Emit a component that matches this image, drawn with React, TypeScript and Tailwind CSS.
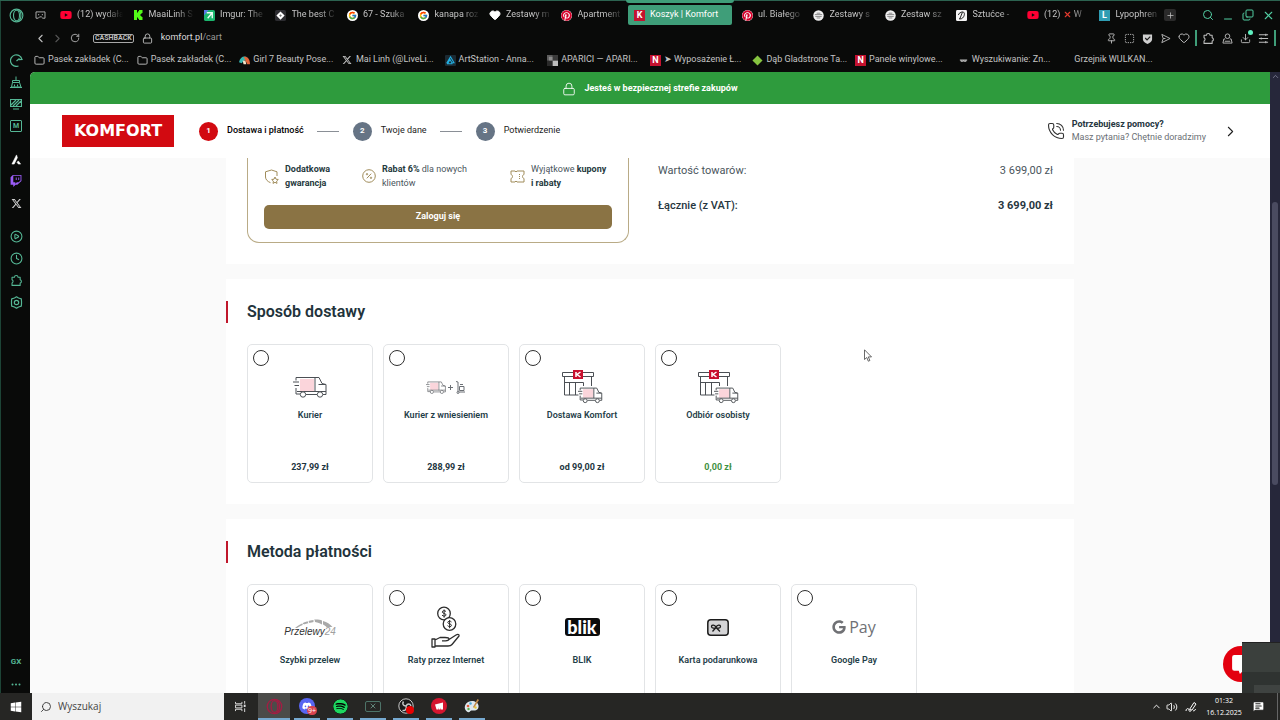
import type { ReactNode } from 'react';
import {
  CirclePlay,
  Clock,
  Folder,
  Heart,
  Lock,
  MessageSquareText,
  PhoneCall,
  Plus,
  RotateCw,
  Search,
  ChevronLeft,
  ChevronRight,
  ChevronUp,
  X,
  Minus,
  Copy,
  Pin,
  SquareDashed,
  Download,
  Volume2,
} from 'lucide-react';
import { FaDiscord, FaPinterest, FaSpotify, FaTwitch, FaWindows, FaXTwitter, FaYoutube, FaGoogle } from 'react-icons/fa6';
import { FcGoogle } from 'react-icons/fc';

/* ---------- small drawings ---------- */

function OperaMark({ className }: { className: string }) {
  return (
    <svg viewBox="0 0 16 16" className={className} fill="none" stroke="currentColor" strokeWidth="1.2">
      <circle cx="8" cy="8" r="6.8" />
      <ellipse cx="8" cy="8" rx="3.2" ry="5.6" />
      <path d="M10 2.5c3.600 1.500 3.600 9.500 0 11" />
    </svg>
  );
}

function PuzzleMark() {
  return (
    <svg viewBox="0 0 16 16" className="size-[13px]" fill="none" stroke="currentColor" strokeWidth="1.300" strokeLinejoin="round">
      <path d="M2.500 4H5.500a2.200 2.200 0 0 1 4.400 0H12.500v3a2.200 2.200 0 0 1 0 4.200V14H2.500v-3a2.200 2.200 0 0 0 0-4z" />
    </svg>
  );
}

function KickMark() {
  return (
    <svg viewBox="0 0 10 10" className="size-[10px]">
      <path d="M1 0h3v2.500h1V1.200h1V0h3.500v3h-1v1h-1v2h1v1h1v3H6V8.800H5V7.500H4V10H1z" fill="#53fc18" />
    </svg>
  );
}

function ImgurMark() {
  return (
    <svg viewBox="0 0 12 12" className="size-[11px]">
      <rect width="12" height="12" rx="2" fill="#1bb76e" />
      <path d="M0 0h5L0 6z" fill="#5a78e8" />
      <path d="M3 3h6v6M9 3 4 9" stroke="#eafff4" strokeWidth="1.500" fill="none" />
    </svg>
  );
}

function DiamondMark() {
  return (
    <svg viewBox="0 0 12 12" className="size-[11px]">
      <rect width="12" height="12" rx="2" fill="#2c2c30" />
      <path d="m6 1.500 4.500 4.500L6 10.500 1.500 6z" fill="#fff" />
      <path d="m6 4.500 1.500 1.500L6 7.500 4.500 6z" fill="#777" />
    </svg>
  );
}

function SketchMark() {
  return (
    <svg viewBox="0 0 12 12" className="size-[11px]">
      <circle cx="6" cy="6" r="5.700" fill="#f0f0f0" />
      <path d="M2 5h8M2.500 7h7M4 3.500h4M4 8.700h4" stroke="#777" strokeWidth=".9" />
    </svg>
  );
}

function FeatherMark() {
  return (
    <svg viewBox="0 0 12 12" className="size-[11px]">
      <rect width="12" height="12" rx="1.500" fill="#f4f4f4" />
      <path d="M5.500 2.500C9 1 10 4 8.500 7S4.500 10 3.500 9.500M7 2.500 4 10M2.500 5.500C3 4 4 3 5.500 2.500" stroke="#111" strokeWidth="1" fill="none" />
    </svg>
  );
}

function Letter({ children, tone }: { children: ReactNode; tone: string }) {
  return (
    <span className={`flex size-[11px] shrink-0 items-center justify-center text-[9px] leading-none font-bold text-white ${tone}`}>
      {children}
    </span>
  );
}

function ArtStationMark() {
  return (
    <svg viewBox="0 0 12 12" className="size-[11px]">
      <rect width="12" height="12" rx="1" fill="#1b2a33" />
      <path d="M6 2 9.800 8.500H7.500L5.500 5 3.500 8.500H2.200zM2.200 9.500h6" fill="none" stroke="#22aee0" strokeWidth="1.200" />
    </svg>
  );
}

function BeautyMark() {
  return (
    <svg viewBox="0 0 12 12" className="size-[11px]">
      <path d="M0 8C1 3 4 1 8 2l1 3-4 1-2 3z" fill="#35b8b0" />
      <path d="M5 2c4-1 7 2 7 8H9L7 6z" fill="#e2653a" />
      <path d="M4 6h3l1 4H5z" fill="#f5e3c8" />
    </svg>
  );
}

function CheckerMark() {
  return (
    <svg viewBox="0 0 12 12" className="size-[11px]">
      <rect width="12" height="12" fill="#5d5d5d" />
      <path d="M6 6h6v6H6z" fill="#bdbdbd" />
      <path d="M0 6h6v6H0z" fill="#2a2a2a" />
      <path d="M6 0h6v6H6z" fill="#3a3a3a" />
      <path d="M2 2h4v4H2z" fill="#8d8d8d" />
    </svg>
  );
}

function Truck({ className }: { className: string }) {
  return (
    <svg viewBox="0 0 34 22" className={className} fill="none" stroke="#4b4f54" strokeWidth="1">
      <rect x="7" y="3" width="14" height="12" fill="#fbd5db" stroke="none" />
      <path d="M3 1.500h19v14.500M3 1.500v3M3 12v6h4M13 18.500h11M30 18.500h3v-10l-4-1-3-6h-4M22 15.500h11M25.500 8.500h7M0 6h6M1.500 9.500H6" />
      <path d="M4 15.500h18" />
      <circle cx="10" cy="18.500" r="2.700" fill="#fff" />
      <circle cx="27" cy="18.500" r="2.700" fill="#fff" />
    </svg>
  );
}

function TruckAndCart() {
  return (
    <span className="flex items-center gap-[2px]">
      <Truck className="h-[13px] w-[20px]" />
      <svg viewBox="0 0 18 13" className="h-[13px] w-[18px]" fill="none" stroke="#6b6f74" strokeWidth="1">
        <path d="M0 6.500h5M2.500 4v5M8 .5l2 .5v10h7M11.500 5.500h4.500v4h-4.500zM12 3.500h3" />
        <circle cx="10" cy="11.500" r="1" fill="#fff" />
      </svg>
    </span>
  );
}

function Store() {
  return (
    <svg viewBox="0 0 42 36" className="h-9 w-[42px]" fill="none" stroke="#4b4f54" strokeWidth="1">
      <path d="M1.500 3.500h31v4h-31zM3.500 7.500V26h14M30.500 7.500V17M3.500 13.500h19V17M8.500 13.500V26M14.500 13.500V26" />
      <rect x="12" y="1" width="10" height="9" fill="#c8102e" stroke="none" />
      <path d="M15 3v5M19.500 3 16 5.500 19.500 8" stroke="#fff" strokeWidth="1.500" />
      <g transform="translate(17 18) scale(.72)">
        <path d="M3 1.500h19l4 0 3 6 4 1v10H3z" fill="#fff" stroke="none" />
        <rect x="7" y="3" width="14" height="12" fill="#fbd5db" stroke="none" />
        <path d="M3 1.500h19v14M3 1.500v3M3 12v6h4M13 18.500h11M30 18.500h3v-10l-4-1-3-6h-4M4 15.500h29M25.500 8.500h7M0 6h6M1.500 9.500H6" strokeWidth="1.300" />
        <circle cx="10" cy="19" r="2.700" fill="#fff" strokeWidth="1.300" />
        <circle cx="27" cy="19" r="2.700" fill="#fff" strokeWidth="1.300" />
      </g>
    </svg>
  );
}

function Przelewy24() {
  return (
    <span className="flex flex-col items-center font-['Liberation_Sans',sans-serif]">
      <svg viewBox="0 0 48 9" className="h-[9px] w-12" fill="#a9a9a9">
        <path d="M9 9C15 4 22 1.500 28 1l0 2C21 4 15 6 11 9z" />
        <path d="M28 .5c3-.3 6 0 8 1l0 4c-2-1.300-4-2-7-2.500z" />
        <path d="M37 2c4 1 7 3 9.500 6h-6c-1-1-2-1.700-3.500-2.500z" />
        <path d="M16 4.500 18 6M22 2l1 2.500M28 .5v4M36.500 1v6" stroke="#fff" strokeWidth="1" />
      </svg>
      <span className="text-[10px] leading-[8px] text-[#333] italic">
        Przelewy<span className="text-[#a0a0a0]">24</span>
      </span>
    </span>
  );
}

function HandCoins() {
  return (
    <svg viewBox="0 0 30 42" className="h-[42px] w-[30px]" fill="none" stroke="#2d2d2d" strokeWidth="1.300" strokeLinejoin="round">
      <circle cx="13" cy="7.500" r="6.300" />
      <circle cx="18.500" cy="18" r="6.300" fill="#fff" />
      <path d="M15 5.500c-1-1.300-4-1-3.700.7.300 1.600 3.700.8 3.700 2.700 0 1.600-3 1.600-4 .2M13.100 3.500v8.200M20.500 16c-1-1.300-4-1-3.700.7.300 1.600 3.700.8 3.700 2.700 0 1.600-3 1.600-4 .2M18.600 14v8.200" strokeWidth="1" />
      <path d="M1 33h3v8H1zM4 34l5-2.500h5c2 0 4 0 4 1.500s-2 1.800-3.500 1.800H11M18 33.500l7-4.500c2-1.200 3.500-.5 3 1l-7 8.500c-1 1.300-2 1.500-4 1.500H4" />
    </svg>
  );
}

function Blik() {
  return (
    <span className="flex h-[18px] w-[35px] items-center justify-center rounded-[3px] bg-[#0c0c0c] pb-[1px] font-['Lato',sans-serif] text-[18px] leading-none font-black text-white">
      blik
    </span>
  );
}

function GiftCard() {
  return (
    <svg viewBox="0 0 22 17" className="h-[17px] w-[22px]" fill="none" stroke="#1c1c1c">
      <rect x=".8" y=".8" width="20.400" height="15.400" rx="3" fill="#d4d4d6" strokeWidth="1.500" />
      <path d="M9 8.500c-1-3-4.500-3-4.500-1s3 2 4.500 1c1-3 4.500-3 4.500-1s-3 2-4.500 1zm0 0-3.500 4M9 8.500l4 4" strokeWidth="1.300" />
    </svg>
  );
}

function GooglePay() {
  return (
    <span className="flex items-center gap-[3px] text-[#707175]">
      <FaGoogle className="size-[14px]" />
      <span className="font-['Open_Sans',sans-serif] text-[16px] leading-5">Pay</span>
    </span>
  );
}

/* ---------- browser frame ---------- */

interface Tab {
  title: ReactNode;
  icon: ReactNode;
  active?: boolean;
}

const youtube = <FaYoutube className="size-[12px] text-[#ff0033]" />;
const pinterest = <FaPinterest className="size-[11px] rounded-full bg-white text-[#d5002a]" />;
const google = (
  <span className="flex size-[11px] items-center justify-center rounded-full bg-white">
    <FcGoogle className="size-[9px]" />
  </span>
);

const tabs: Tab[] = [
  { title: '(12) wydała', icon: youtube },
  { title: 'MaaiLinh S', icon: <KickMark /> },
  { title: 'Imgur: The', icon: <ImgurMark /> },
  { title: 'The best C', icon: <DiamondMark /> },
  { title: '67 - Szuka', icon: google },
  { title: 'kanapa roz', icon: google },
  { title: 'Zestawy m', icon: <Heart className="size-[12px] fill-white text-white" /> },
  { title: 'Apartment', icon: pinterest },
  { title: 'Koszyk | Komfort', icon: <Letter tone="bg-[#c4122f]">K</Letter>, active: true },
  { title: 'ul. Białego', icon: pinterest },
  { title: 'Zestawy s', icon: <SketchMark /> },
  { title: 'Zestaw sz', icon: <SketchMark /> },
  { title: 'Sztućce -', icon: <FeatherMark /> },
  {
    title: (
      <>
        (12) <X className="inline size-[9px] text-[#e23a2e]" strokeWidth={3} /> W
      </>
    ),
    icon: youtube,
  },
  { title: 'Lypophren', icon: <Letter tone="bg-[#2f9db3]">L</Letter> },
];

const folder = <Folder className="size-[11px]" />;
const bookmarks: Tab[] = [
  { title: 'Pasek zakładek (C...', icon: folder },
  { title: 'Pasek zakładek (C...', icon: folder },
  { title: 'Girl 7 Beauty Pose...', icon: <BeautyMark /> },
  { title: 'Mai Linh (@LiveLi...', icon: <FaXTwitter className="size-[10px]" /> },
  { title: 'ArtStation - Anna...', icon: <ArtStationMark /> },
  { title: 'APARICI — APARI...', icon: <CheckerMark /> },
  { title: '➤ Wyposażenie Ł...', icon: <Letter tone="bg-[#c4122f]">N</Letter> },
  {
    title: 'Dąb Gladstrone Ta...',
    icon: (
      <svg viewBox="0 0 12 12" className="size-[11px]">
        <path d="m6 .5 5.500 5.500L6 11.500.5 6z" fill="#86c440" />
      </svg>
    ),
  },
  { title: 'Panele winylowe...', icon: <Letter tone="bg-[#c4122f]">N</Letter> },
  {
    title: 'Wyszukiwanie: Zn...',
    icon: (
      <svg viewBox="0 0 12 12" className="size-[11px]" fill="none" stroke="#b8b8b8" strokeWidth="1.200">
        <path d="M2 5.500h8M3 5.500c0 2 2.500 2 3 0 .5 2 3 2 3 0" />
      </svg>
    ),
  },
  { title: 'Grzejnik WULKAN...', icon: null },
];

function TabStrip() {
  return (
    <div className="flex h-7 items-center pr-[5px] pl-[5px]">
      <svg viewBox="0 0 12 10" className="h-[9px] w-[11px] text-[#b9b9b9]" fill="none" stroke="currentColor">
        <path d="M1 1h10v7H8.500L7 6.500H5L3.500 8H1z" />
        <path d="M3.500 4h1M7.500 4h1" strokeWidth="1.500" />
      </svg>
      <nav aria-label="Karty" className="ml-[8px] flex h-full min-w-0 flex-1 items-center">
        {tabs.map((tab, i) =>
          tab.active ? (
            <button
              key={i}
              className="relative mr-[3px] ml-[2px] flex h-5 w-[104px] shrink-0 items-center gap-[5px] rounded-[2px] bg-[#3f9e79] pl-[6px] text-white"
            >
              <span className="absolute -inset-x-[2px] -top-[5px] h-[3px] rounded-b-[3px] bg-[#3f9e79]" />
              {tab.icon}
              <span className="whitespace-nowrap">{tab.title}</span>
            </button>
          ) : (
            <button key={i} className="flex min-w-0 flex-1 items-center gap-[5px] pr-[3px] pl-[6px]">
              <span className="flex w-[12px] shrink-0 justify-center">{tab.icon}</span>
              <span className="min-w-0 flex-1 text-left whitespace-nowrap [mask-image:linear-gradient(to_right,black_60%,transparent)]">
                {tab.title}
              </span>
            </button>
          ),
        )}
      </nav>
      <button aria-label="Nowa karta" className="flex size-[12px] items-center justify-center rounded-[2px] bg-[#2a2a2a]">
        <Plus className="size-[9px]" />
      </button>
      <div className="ml-[26px] flex items-center gap-[8px] text-[#52cfa4]">
        <button aria-label="Szukaj kart"><Search className="size-[12px]" /></button>
        <button aria-label="Minimalizuj"><Minus className="mt-[8px] size-[12px]" /></button>
        <button aria-label="Przywróć"><Copy className="size-[12px] -scale-x-100 rotate-180" /></button>
        <button aria-label="Zamknij"><X className="size-[13px]" /></button>
      </div>
    </div>
  );
}

function AddressBar() {
  return (
    <div className="flex h-[18px] items-center pr-[4px] pl-[4px] text-[#bdbdbd]">
      <button aria-label="Wstecz"><ChevronLeft className="size-[13px]" /></button>
      <button aria-label="Dalej" className="ml-[4px] text-[#555]"><ChevronRight className="size-[13px]" /></button>
      <button aria-label="Odśwież" className="ml-[6px]"><RotateCw className="size-[10px]" /></button>
      <span className="ml-[13px] rounded-[2px] border border-[#a8a8a8] px-px text-[7px] leading-[7px] font-bold">CASHBACK</span>
      <Lock className="ml-[8px] size-[11px]" />
      <span className="ml-[8px] text-[9px] text-[#dcdcdc]">
        komfort.pl<span className="text-[#9a9a9a]">/cart</span>
      </span>
      <div className="ml-auto flex items-center gap-[7px]">
        <Pin className="size-[11px]" />
        <SquareDashed className="size-[11px]" />
        <svg viewBox="0 0 12 12" className="size-[11px]">
          <path d="M1 1.500h10V7c0 2.500-3 4-5 5-2-1-5-2.500-5-5z" fill="#cfcfcf" />
          <path d="m3.500 5.500 2 2 3.500-3.500" fill="none" stroke="#1a1a1a" strokeWidth="1.300" />
        </svg>
        <svg viewBox="0 0 12 12" className="size-[11px]" fill="none" stroke="currentColor" strokeLinejoin="round">
          <path d="M2 1.500 11 6l-9 4.500 1.500-4.500zM3.500 6H6" />
        </svg>
        <Heart className="size-[12px]" />
        <span className="-mx-[2px] h-4 w-[2px] bg-[#3f9e79]" />
        <PuzzleMark />
        <svg viewBox="0 0 12 12" className="size-[11px]" fill="none" stroke="currentColor">
          <circle cx="6" cy="3.500" r="2.500" />
          <path d="M3.500 6.500H2l-1 4.500h10l-1-4.500H8.500M3 9h6" />
        </svg>
        <span className="relative">
          <Download className="size-[11px]" />
          <span className="absolute -top-[3px] -right-[2px] size-[5px] rounded-full bg-[#5ff0c0]" />
        </span>
        <svg viewBox="0 0 12 12" className="size-[11px]" fill="none" stroke="currentColor" strokeWidth="1.100">
          <path d="M1 2h10M1 6h10M1 10h10M8.500.8v2.400M3.500 4.800v2.400M8.500 8.800v2.400" />
        </svg>
        <span className="-ml-[2px] h-4 w-[2px] bg-[#3f9e79]" />
      </div>
    </div>
  );
}

function BookmarksBar() {
  return (
    <nav aria-label="Zakładki" className="grid h-[25px] grid-cols-11 items-center pt-px pr-[117px] pl-[4px]">
      {bookmarks.map((item, i) => (
        <a key={i} href="#" className="flex min-w-0 items-center gap-[3px] whitespace-nowrap">
          <span className="flex w-[11px] shrink-0 justify-center">{item.icon}</span>
          <span>{item.title}</span>
        </a>
      ))}
    </nav>
  );
}

function SideItem({ label, children }: { label: string; children: ReactNode }) {
  return (
    <button aria-label={label} className="flex h-[22px] w-full items-center justify-center">
      {children}
    </button>
  );
}

function Sidebar() {
  return (
    <aside className="flex w-[30px] shrink-0 flex-col items-center border-l border-[#1d4436] pl-[1px] text-[#55b795]">
      <div className="flex h-[48px] w-full justify-center pt-[7px]">
        <OperaMark className="size-[15px]" />
      </div>
      <SideItem label="Speed Dial">
        <svg viewBox="0 0 13 13" className="size-[13px]" fill="none" stroke="currentColor" strokeWidth="1.200">
          <path d="M8.500 12A5.800 5.800 0 1 1 12 5.500M6.500 7 9.500 4.500M10.500 2.500l1.500 3-3 .2" />
        </svg>
      </SideItem>
      <SideItem label="GX Cleaner">
        <svg viewBox="0 0 12 12" className="size-[12px]" fill="none" stroke="currentColor">
          <path d="M6 .5V4M2.500 4.500h7v2h-7zM2.500 6.500l-1 4.500h9.500l-1.500-4.500M4.500 8.500v2M7.500 8.500v2M0 11.500h12" />
        </svg>
      </SideItem>
      <SideItem label="Motywy">
        <svg viewBox="0 0 12 12" className="size-[12px]" fill="none" stroke="currentColor">
          <path d="M.5 1.500h11v7H.5zM1 7l5-5M3 8l6-6M6 8l5-5M3 11h6" strokeWidth="1.200" />
        </svg>
      </SideItem>
      <SideItem label="Mody">
        <span className="flex size-[12px] items-center justify-center rounded-[1px] border border-current text-[7px] leading-none font-bold">M</span>
      </SideItem>
      <div className="mt-[11px] w-full">
        <SideItem label="Aria">
          <svg viewBox="0 0 12 12" className="size-[11px]">
            <path d="M6 1 1 11h2.500L7 4zM8 7.500 10.500 11H8L6.500 9z" fill="#fff" stroke="#fff" strokeWidth=".6" />
          </svg>
        </SideItem>
        <SideItem label="Twitch"><FaTwitch className="size-[12px] text-[#9a5cf5]" /></SideItem>
        <SideItem label="X"><FaXTwitter className="size-[11px] text-[#cfcfcf]" /></SideItem>
      </div>
      <div className="mt-[11px] w-full">
        <SideItem label="Player"><CirclePlay className="size-[13px]" /></SideItem>
        <SideItem label="Historia"><Clock className="size-[13px]" /></SideItem>
        <SideItem label="Rozszerzenia"><PuzzleMark /></SideItem>
        <SideItem label="Ustawienia">
          <svg viewBox="0 0 13 13" className="size-[13px]" fill="none" stroke="currentColor" strokeWidth="1.200" strokeLinejoin="round">
            <path d="m6.500.8 2 1.200 2.800.8.2 2.500v2.400l-.2 2.500-2.800.8-2 1.200-2-1.200-2.800-.8-.2-2.500V5.300l.2-2.500L4.500 2z" />
            <circle cx="6.500" cy="6.500" r="2.200" />
          </svg>
        </SideItem>
      </div>
      <div className="mt-auto h-[42px] w-full text-[8px] font-bold">
        <SideItem label="GX Corner">GX</SideItem>
        <SideItem label="Więcej">
          <svg viewBox="0 0 10 3" className="h-[3px] w-[10px]" fill="currentColor">
            <circle cx="1.500" cy="1.500" r="1" />
            <circle cx="5" cy="1.500" r="1" />
            <circle cx="8.500" cy="1.500" r="1" />
          </svg>
        </SideItem>
      </div>
    </aside>
  );
}

/* ---------- shop page ---------- */

const steps = ['Dostawa i płatność', 'Twoje dane', 'Potwierdzenie'];

function ShopHeader() {
  return (
    <header>
      <div className="flex h-8 items-center justify-center gap-[8px] bg-[#2e9b3d] pt-px font-bold text-white">
        <Lock className="size-[14px]" strokeWidth={1.5} />
        Jesteś w bezpiecznej strefie zakupów
      </div>
      <div className="flex h-[54px] items-center bg-white pr-[31px] pl-8">
        <a
          href="#"
          className="flex h-8 w-28 items-center justify-center bg-[#d20a11] font-['DejaVu_Sans',sans-serif] text-[16px] leading-none font-bold text-white"
        >
          KOMFORT
        </a>
        <ol className="ml-[25px] flex items-center text-[#1c1c1c]">
          {steps.map((step, i) => (
            <li key={step} className="flex items-center">
              {i > 0 && <span className="mr-[14px] ml-[13px] h-px w-[22px] bg-[#8a8f96]" />}
              <span
                className={`flex size-[19px] items-center justify-center rounded-full text-[8px] font-bold text-white ${
                  i === 0 ? 'bg-[#d20a11]' : 'bg-[#667485]'
                }`}
              >
                {i + 1}
              </span>
              <span className={`ml-[9px] ${i === 0 ? 'font-medium text-black' : ''}`}>{step}</span>
            </li>
          ))}
        </ol>
        <a href="#" className="ml-auto flex items-center leading-[13px] text-[#6b7075]">
          <PhoneCall className="size-[18px] text-[#333]" strokeWidth={1.5} />
          <span className="ml-[7px]">
            <strong className="block font-bold text-[#263640]">Potrzebujesz pomocy?</strong>
            Masz pytania? Chętnie doradzimy
          </span>
          <ChevronRight className="ml-[16px] size-[17px] text-[#222]" strokeWidth={1.5} />
        </a>
      </div>
    </header>
  );
}

function Summary() {
  return (
    <section className="flex gap-[29px] bg-white px-[21px] pb-[21px]">
      <div className="w-[382px] rounded-b-[12px] border border-t-0 border-[#b9ab86] px-4 pt-1 pb-[13px]">
        <ul className="grid grid-cols-[98px_148px_1fr] leading-[14px] text-[#4a555c] [&_b]:font-bold [&_b]:text-[#263a40] [&_li]:flex [&_li]:items-center [&_li]:gap-[6px] [&_li]:whitespace-nowrap [&_svg]:text-[#a08c5b]">
          <li>
            <svg viewBox="0 0 15 15" className="size-[15px]" fill="none" stroke="currentColor">
              <path d="M7.500 1 13 2.800V7M7.500 1 1.500 2.800V8c0 2.500 2 4.500 5 5.700" />
              <path d="m11 8 1 2.200 2.300.3-1.700 1.600.4 2.300-2-1.100-2 1.100.4-2.300-1.700-1.600 2.300-.3z" />
            </svg>
            <span><b>Dodatkowa<br />gwarancja</b></span>
          </li>
          <li>
            <svg viewBox="0 0 14 14" className="size-[14px]" fill="none" stroke="currentColor">
              <circle cx="7" cy="7" r="6.300" />
              <path d="m4.800 9.300 4.400-4.600" />
              <circle cx="5" cy="5.200" r=".7" />
              <circle cx="9" cy="8.800" r=".7" />
            </svg>
            <span><b>Rabat 6%</b> dla nowych<br />klientów</span>
          </li>
          <li>
            <svg viewBox="0 0 15 13" className="h-[13px] w-[15px]" fill="none" stroke="currentColor">
              <path d="M1 1h4l1 1 1-1h7v3.500c-2 .5-2 3.500 0 4V12H7l-1-1-1 1H1V8.500c2-.5 2-3.500 0-4z" />
              <path d="M9.500 4v1M9.500 6v1M9.500 8v1" />
            </svg>
            <span>Wyjątkowe <b>kupony<br />i rabaty</b></span>
          </li>
        </ul>
        <button className="mt-[15px] block h-6 w-full rounded-[5px] bg-[#8a7344] font-bold text-white">Zaloguj się</button>
      </div>
      <dl className="flex-1 pt-[5px] text-[11px] leading-4 text-[#4a555c]">
        <div className="flex justify-between">
          <dt>Wartość towarów:</dt>
          <dd>3 699,00 zł</dd>
        </div>
        <div className="mt-[19px] flex justify-between text-[#263640]">
          <dt className="font-medium">Łącznie (z VAT):</dt>
          <dd className="font-bold">3 699,00 zł</dd>
        </div>
      </dl>
    </section>
  );
}

interface Option {
  name: string;
  art: ReactNode;
  price?: string;
  free?: boolean;
}

const delivery: Option[] = [
  { name: 'Kurier', art: <Truck className="h-[22px] w-[34px]" />, price: '237,99 zł' },
  { name: 'Kurier z wniesieniem', art: <TruckAndCart />, price: '288,99 zł' },
  { name: 'Dostawa Komfort', art: <Store />, price: 'od 99,00 zł' },
  { name: 'Odbiór osobisty', art: <Store />, price: '0,00 zł', free: true },
];

const payment: Option[] = [
  { name: 'Szybki przelew', art: <Przelewy24 /> },
  { name: 'Raty przez Internet', art: <HandCoins /> },
  { name: 'BLIK', art: <Blik /> },
  { name: 'Karta podarunkowa', art: <GiftCard /> },
  { name: 'Google Pay', art: <GooglePay /> },
];

function OptionSection({ title, group, options }: { title: string; group: string; options: Option[] }) {
  return (
    <section className="mt-[15px] bg-white pt-[22px] pb-[21px]">
      <h2 className="border-l-2 border-[#c0172b] pl-[19px] text-[16px] leading-[22px] font-semibold text-[#22333b]">{title}</h2>
      <div className="mt-[21px] flex flex-wrap gap-[10px] px-[21px]">
        {options.map((option) => (
          <label
            key={option.name}
            className="flex h-[139px] w-[126px] flex-col items-center rounded-[5px] border border-[#e2e4e6] pb-[8px] leading-[14px] font-semibold text-[#1f4049]"
          >
            <input
              type="radio"
              name={group}
              className="mt-[5px] ml-[5px] size-4 appearance-none self-start rounded-full border border-[#2f2f2f] bg-white checked:border-[5px]"
            />
            <span className="flex h-[42px] items-center justify-center font-normal">{option.art}</span>
            <span className={option.price ? '' : 'mt-[5px]'}>{option.name}</span>
            {option.price && (
              <span className={`mt-auto font-bold ${option.free ? 'text-[#3f9142]' : 'text-[#1d3540]'}`}>{option.price}</span>
            )}
          </label>
        ))}
      </div>
    </section>
  );
}

function ShopPage() {
  return (
    <div className="min-w-0 flex-1 overflow-hidden rounded-tl-[5px] bg-[#fafafa]">
      <ShopHeader />
      <main className="mx-auto w-[848px] max-w-full">
        <Summary />
        <OptionSection title="Sposób dostawy" group="delivery" options={delivery} />
        <OptionSection title="Metoda płatności" group="payment" options={payment} />
      </main>
    </div>
  );
}

/* ---------- taskbar ---------- */

const apps = [
  { name: 'Opera GX', icon: <OperaMark className="size-[17px] text-[#a51c43]" />, current: true },
  {
    name: 'Discord',
    icon: (
      <span className="relative flex size-4 items-center justify-center rounded-full bg-[#5865f2]">
        <FaDiscord className="size-[10px] text-white" />
        <span className="absolute -right-[2px] -bottom-[1px] rounded-full bg-[#d8434e] px-[1px] text-[7px] leading-[9px] text-white">9+</span>
      </span>
    ),
  },
  { name: 'Spotify', icon: <FaSpotify className="size-[15px] rounded-full bg-black text-[#1ed760]" /> },
  {
    name: 'Xbox',
    icon: (
      <span className="flex h-[11px] w-[16px] items-center justify-center rounded-[2px] border border-[#4d7368] text-[#7fb5a4]">
        <X className="size-[8px]" />
      </span>
    ),
  },
  {
    name: 'OBS',
    icon: (
      <span className="relative">
        <svg viewBox="0 0 16 16" className="size-4">
          <circle cx="8" cy="8" r="7.200" fill="#1b1b1b" stroke="#c8c8c8" />
          <path d="M8 8C5 8 4 5.500 5.500 3.500M8 8c1.500-2.600 4-2.500 5 0M8 8c1 2.500-.5 5-3.500 4.500" stroke="#c8c8c8" strokeWidth="1.500" fill="none" />
        </svg>
        <span className="absolute right-0 bottom-0 size-[8px] rounded-full bg-[#e80000]" />
      </span>
    ),
  },
  {
    name: 'Riot Client',
    icon: (
      <svg viewBox="0 0 16 16" className="size-4">
        <circle cx="8" cy="8" r="8" fill="#d5152f" />
        <path d="M4 6.500 12 4.500v7l-2 0-.3-2-.2 2H8l-.3-2-.2 2H5.500z" fill="#fff" />
      </svg>
    ),
  },
  {
    name: 'Paint',
    icon: (
      <svg viewBox="0 0 16 16" className="size-4">
        <path d="M8 3C3 3 0 7 1 11c1 3 4 4 5 2.500.8-1.500 2-1 4-1 3 0 5-2 4.500-5C14 4.500 11 3 8 3z" fill="#dfe8ee" />
        <path d="m9 9 4.500-8 1.500 1L10 10z" fill="#c28a4a" />
        <circle cx="4" cy="8" r="1.300" fill="#e05a3a" />
        <circle cx="6.500" cy="5.500" r="1.300" fill="#4aa8d8" />
        <circle cx="4.500" cy="11" r="1.200" fill="#5bb04a" />
        <circle cx="11.500" cy="9.500" r="1.200" fill="#e8c63a" />
      </svg>
    ),
  },
];

function Taskbar() {
  return (
    <footer className="flex h-[27px] shrink-0 items-center bg-[#262624] font-['Open_Sans',sans-serif] text-white">
      <button aria-label="Start" className="flex w-8 justify-center"><FaWindows className="size-[12px]" /></button>
      <div className="flex h-full w-[192px] items-center gap-[6px] bg-[#f1f1f1] pl-[8px] text-[#333]">
        <Search className="size-[12px] -scale-x-100" strokeWidth={1.8} />
        <input
          type="search"
          aria-label="Wyszukaj"
          placeholder="Wyszukaj"
          className="w-[140px] bg-transparent text-[10px] outline-none placeholder:text-[#444]"
        />
      </div>
      <button aria-label="Widok zadań" className="flex w-[34px] justify-center">
        <svg viewBox="0 0 13 12" className="h-[11px] w-[12px]" fill="none" stroke="#e4e4e4">
          <path d="M.5 1v2h7V1M.5 11V9h7v2M.5 4.500h7v3h-7zM10.500 0v3M10.500 8v4" />
          <path d="M10.500 4v2.500" strokeWidth="2" />
        </svg>
      </button>
      <div className="flex h-full gap-px">
        {apps.map((app) => (
          <button
            key={app.name}
            aria-label={app.name}
            className={`flex h-full w-8 flex-col items-center ${app.current ? 'bg-[#4b4b49]' : ''}`}
          >
            <span className="flex flex-1 items-center pt-px">{app.icon}</span>
            <span className={`h-[2px] bg-[#76a9d0] ${app.current ? 'w-full' : 'w-[26px]'}`} />
          </button>
        ))}
      </div>
      <div className="ml-auto flex h-full items-center">
        <ChevronUp className="size-[11px]" />
        <Volume2 className="ml-[4px] size-[12px]" strokeWidth={1.8} />
        <svg viewBox="0 0 12 12" className="ml-[7px] size-[12px]" fill="none" stroke="currentColor">
          <path d="M1 10c0-3 3-3 3-1s2 2 2 0M4.500 8.500 9 1.500l2 1.500L7 9zM8 9.500c1 1 2 0 2.500-1.500" />
        </svg>
        <time className="ml-[9px] w-[36px] text-center text-[7px] leading-3 whitespace-nowrap">
          01:32
          <br />
          16.12.2025
        </time>
        <MessageSquareText className="ml-[10px] size-[13px] fill-white stroke-[#262624]" />
        <span className="ml-[12px] h-full w-px bg-[#666]" />
        <span className="w-[2px]" />
      </div>
    </footer>
  );
}

/* ---------- desktop ---------- */

export default function App() {
  return (
    <div className="relative flex h-screen flex-col overflow-hidden bg-[#090a09] font-['Roboto',sans-serif] text-[9px] text-[#c4c4c4]">
      <div className="relative flex min-h-0 flex-1 border-t border-[#2c6350]">
        <Sidebar />
        <div className="flex min-w-0 flex-1 flex-col">
          <TabStrip />
          <AddressBar />
          <BookmarksBar />
          <div className="flex min-h-0 flex-1">
            <ShopPage />
            <div className="flex w-[10px] shrink-0 flex-col items-center bg-[#26273a]">
              <ChevronUp className="size-[9px] text-[#8a8ba0]" />
              <span className="mt-[121px] h-[283px] w-[6px] rounded-full bg-[#4a4b60]" />
            </div>
          </div>
        </div>
        {/* chat launcher and the small window floating above it */}
        <button aria-label="Czat" className="absolute right-[21px] bottom-[11px] flex size-9 items-center justify-center rounded-full bg-[#e3000f]">
          <svg viewBox="0 0 18 18" className="size-[20px]" fill="#fff">
            <path d="M3 1h12a2 2 0 0 1 2 2v10a2 2 0 0 1-2 2h-4l-3 3-1-3H3a2 2 0 0 1-2-2V3a2 2 0 0 1 2-2z" />
          </svg>
        </button>
        <div className="absolute right-0 bottom-0 flex h-[51px] w-[38px] flex-col bg-[#2f3331]">
          <span className="h-[30px] border-t border-[#222] bg-[#3b403d]" />
          <span className="mt-auto ml-[12px] h-[8px] bg-[#3f4341]" />
        </div>
      </div>
      <Taskbar />
      <svg viewBox="0 0 9 13" className="absolute top-[349px] left-[864px] h-[13px] w-[9px]" fill="#fff" stroke="#444" strokeWidth=".8">
        <path d="M.5.8v9.700l2.300-2 1.500 3.700 1.600-.7-1.600-3.600h3.200z" />
      </svg>
    </div>
  );
}
